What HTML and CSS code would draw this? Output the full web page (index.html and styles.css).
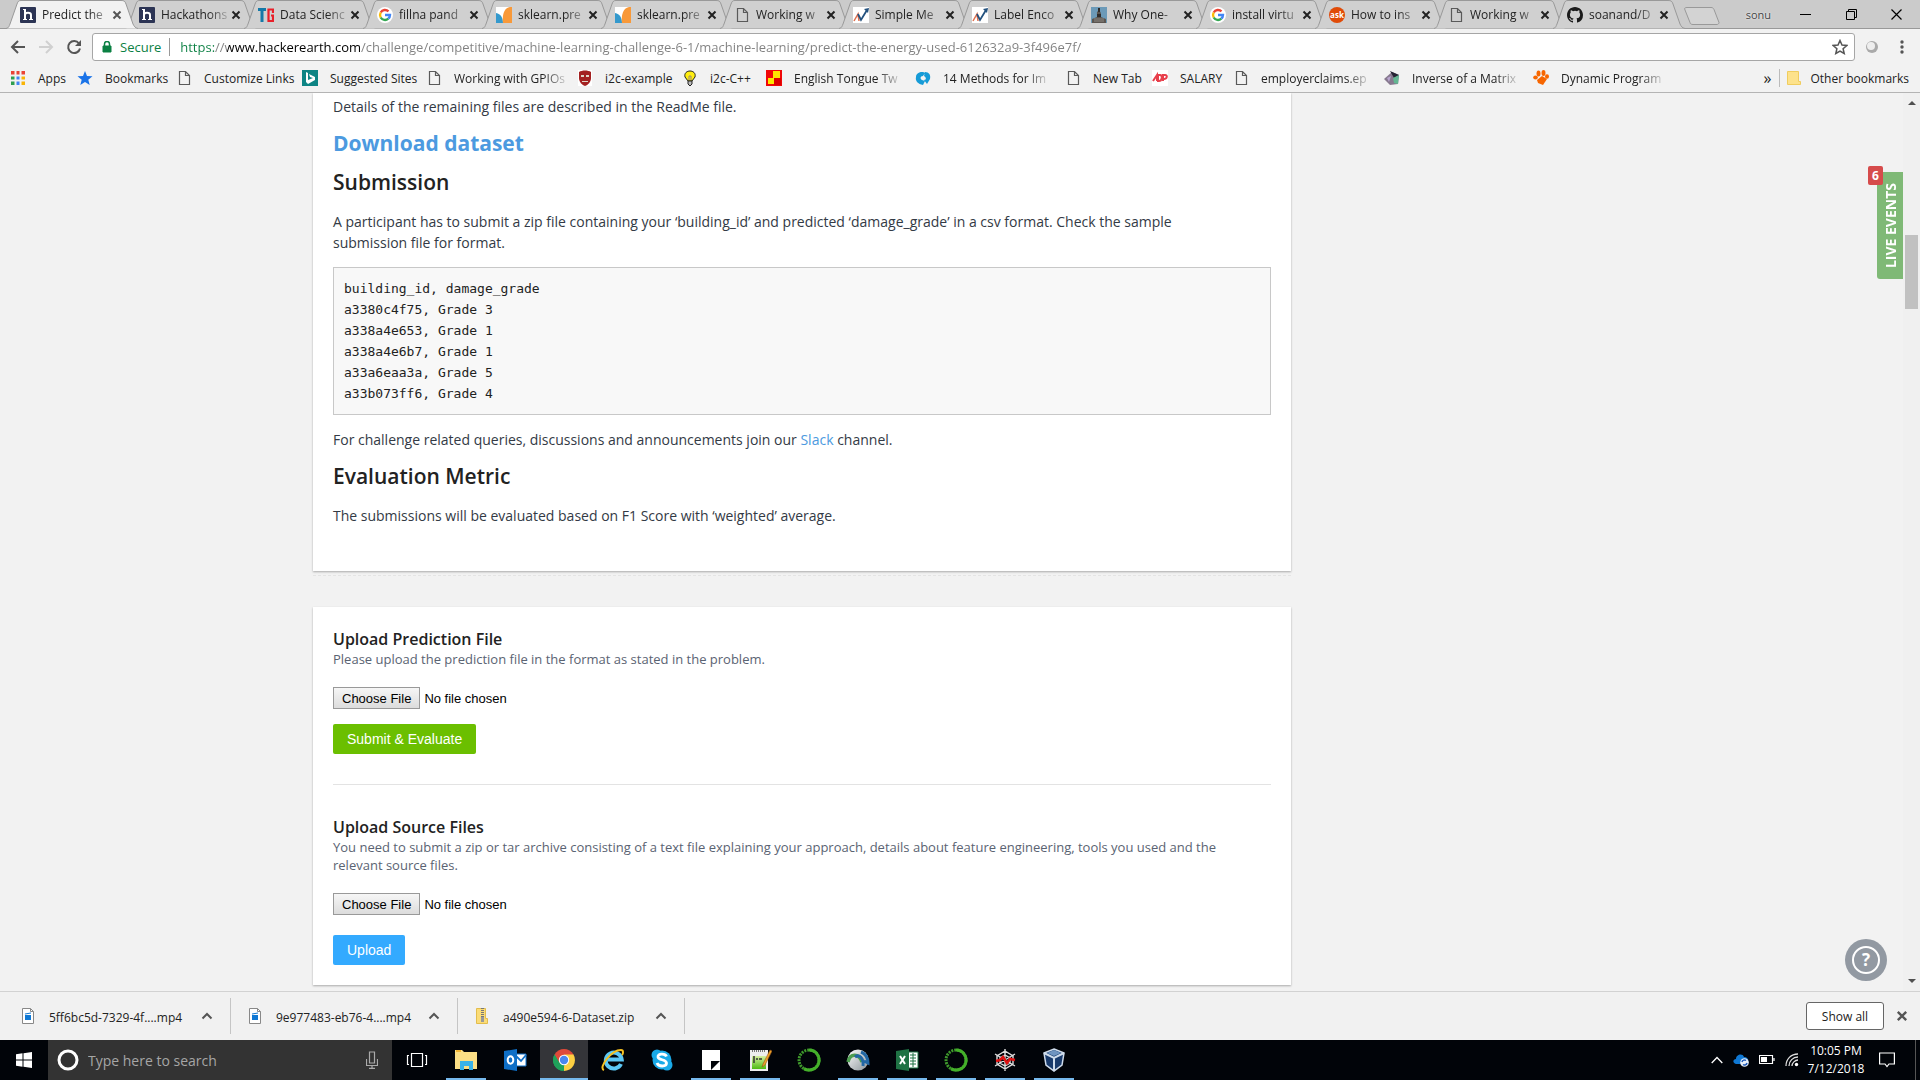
FILE: index.html
```html
<!DOCTYPE html>
<html lang="en">
<head>
<meta charset="utf-8">
<title>Predict the energy used</title>
<link rel="stylesheet" href="styles.css">
</head>
<body>
<svg class="defs" aria-hidden="true">
  <defs>
    <linearGradient id="metal" x1="0" y1="0" x2="1" y2="1"><stop offset="0" stop-color="#fff"/><stop offset="1" stop-color="#8a9399"/></linearGradient>
    <linearGradient id="green" x1="0" y1="0" x2="0" y2="1"><stop offset="0" stop-color="#d6f0a0"/><stop offset="1" stop-color="#4dbb12"/></linearGradient>
  </defs>
  <symbol id="shape" viewBox="0 0 132 29"><path d="M0 28.500C3 28 3 26 4 24L11 4C12 1 13 .5 15 .5H115C118 .5 119 1 120 4L127 24C128 26 129 28 132 28.500" stroke="#999"/></symbol>
  <symbol id="close" viewBox="0 0 10 10"><path d="M1.500 1.500l7 7m0-7l-7 7" stroke="currentColor" stroke-width="2" fill="none"/></symbol>
  <symbol id="caret" viewBox="0 0 12 8"><path d="M1.500 6.500L6 2l4.500 4.500" stroke="currentColor" stroke-width="2" fill="none"/></symbol>
  <symbol id="he" viewBox="0 0 16 16"><rect width="16" height="16" rx="1" fill="#2c3454"/><path d="M5 2v10M5 8c0-3 6-3 6 0v4" stroke="#fff" stroke-width="2" fill="none"/><path d="M3 2.500h2M3 12.500h4M9 12.500h4" stroke="#fff"/></symbol>
  <symbol id="tg" viewBox="0 0 16 16"><path d="M0 2.500h8M4 2v13" stroke="#1479a8" stroke-width="3" fill="none"/><path d="M15 6V2.500h-4.500v11.500H15V8.500h-2" stroke="#e8202a" stroke-width="2.200" fill="none"/></symbol>
  <symbol id="google" viewBox="0 0 16 16"><circle cx="8" cy="8" r="8" fill="#fff"/><g fill="none" stroke-width="2.400"><path d="M11.500 4.400A5 5 0 0 0 3.700 5.500" stroke="#ea4335"/><path d="M3.700 5.500a5 5 0 0 0 0 5" stroke="#fbbc05"/><path d="M3.700 10.500a5 5 0 0 0 7.600 1.200" stroke="#34a853"/><path d="M11.300 11.700A5 5 0 0 0 13 8H8" stroke="#4285f4"/></g></symbol>
  <symbol id="sk" viewBox="0 0 16 16"><rect width="16" height="16" fill="#fff"/><path d="M0 6c5 1 7 5 7 10H0z" fill="#3499cd"/><path d="M7 16C6 8 8 1 14 0h2v16z" fill="#f89939"/></symbol>
  <symbol id="page" viewBox="0 0 16 16"><path d="M3.500 1.500h6l4 4v9h-10zM9.500 1.500v4h4" fill="none" stroke="#5a5a5a" stroke-width="1.200"/></symbol>
  <symbol id="chart" viewBox="0 0 16 16"><rect width="16" height="16" fill="#fff"/><path d="M1 14l4-7 1 7" stroke="#e0704e" stroke-width="1.500" fill="none"/><path d="M5 7l3 6 6-10" stroke="#23517e" stroke-width="1.800" fill="none"/><path d="M11 2l5-1-1 5z" fill="#23517e"/></symbol>
  <symbol id="photo" viewBox="0 0 16 16"><rect width="16" height="16" fill="#6c9ab8"/><path d="M1 16v-4l5-2V7c-1-4 4-4 4 0v3l5 2v4z" fill="#5b5550"/><path d="M7 1h2v4H7zM6 7h4v3H6z" fill="#302c2a"/><path d="M3 12h10M3 14h10" stroke="#8e8a83"/></symbol>
  <symbol id="github" viewBox="0 0 16 16"><path fill="#1b1b1b" d="M8 0C3.580 0 0 3.580 0 8c0 3.540 2.290 6.530 5.470 7.590.4.070.55-.17.55-.38 0-.19-.01-.82-.01-1.490-2.010.37-2.530-.49-2.690-.94-.09-.23-.48-.94-.82-1.130-.28-.15-.68-.52-.01-.53.63-.01 1.080.58 1.230.82.72 1.210 1.870.87 2.330.66.070-.52.28-.87.51-1.070-1.780-.2-3.640-.89-3.640-3.950 0-.87.31-1.590.82-2.150-.08-.2-.36-1.020.08-2.120 0 0 .67-.21 2.200.82a7.600 7.600 0 0 1 4 0c1.530-1.040 2.200-.82 2.200-.82.44 1.100.16 1.920.08 2.120.51.56.82 1.270.82 2.150 0 3.070-1.870 3.750-3.650 3.950.29.25.54.73.54 1.480 0 1.070-.01 1.930-.01 2.200 0 .21.15.46.55.38A8 8 0 0 0 16 8c0-4.420-3.580-8-8-8z"/></symbol>
  <symbol id="video" viewBox="0 0 12 16"><path d="M.5.5h8l3 3v12H.5z" fill="#fff" stroke="#888"/><path d="M8.500.5v3h3" fill="none" stroke="#888"/><path d="M3 7h6v5H3z" fill="#0f78d4"/><path d="M3 6l6-1" stroke="#0f78d4"/></symbol>
  <symbol id="ring" viewBox="0 0 24 24"><circle cx="12" cy="12" r="10" fill="none" stroke="#3f9a2c" stroke-width="3" stroke-dasharray="2 1"/><path d="M12 2a10 10 0 1 1-5 18.600" fill="none" stroke="#44b02a" stroke-width="3"/></symbol>
</svg>

<header class="browser">
  <div class="strip">
    <nav class="tabs" aria-label="Tabs">
      <div class="tab active"><svg class="shape"><use href="#shape"/></svg><svg class="fav"><use href="#he"/></svg><span class="title">Predict the</span><button class="x" aria-label="Close"><svg><use href="#close"/></svg></button></div>
      <div class="tab"><svg class="shape"><use href="#shape"/></svg><svg class="fav"><use href="#he"/></svg><span class="title">Hackathons</span><button class="x" aria-label="Close"><svg><use href="#close"/></svg></button></div>
      <div class="tab"><svg class="shape"><use href="#shape"/></svg><svg class="fav"><use href="#tg"/></svg><span class="title">Data Scienc</span><button class="x" aria-label="Close"><svg><use href="#close"/></svg></button></div>
      <div class="tab"><svg class="shape"><use href="#shape"/></svg><svg class="fav"><use href="#google"/></svg><span class="title">fillna pand</span><button class="x" aria-label="Close"><svg><use href="#close"/></svg></button></div>
      <div class="tab"><svg class="shape"><use href="#shape"/></svg><svg class="fav"><use href="#sk"/></svg><span class="title">sklearn.pre</span><button class="x" aria-label="Close"><svg><use href="#close"/></svg></button></div>
      <div class="tab"><svg class="shape"><use href="#shape"/></svg><svg class="fav"><use href="#sk"/></svg><span class="title">sklearn.pre</span><button class="x" aria-label="Close"><svg><use href="#close"/></svg></button></div>
      <div class="tab"><svg class="shape"><use href="#shape"/></svg><svg class="fav"><use href="#page"/></svg><span class="title">Working w</span><button class="x" aria-label="Close"><svg><use href="#close"/></svg></button></div>
      <div class="tab"><svg class="shape"><use href="#shape"/></svg><svg class="fav"><use href="#chart"/></svg><span class="title">Simple Me</span><button class="x" aria-label="Close"><svg><use href="#close"/></svg></button></div>
      <div class="tab"><svg class="shape"><use href="#shape"/></svg><svg class="fav"><use href="#chart"/></svg><span class="title">Label Enco</span><button class="x" aria-label="Close"><svg><use href="#close"/></svg></button></div>
      <div class="tab"><svg class="shape"><use href="#shape"/></svg><svg class="fav"><use href="#photo"/></svg><span class="title">Why One-</span><button class="x" aria-label="Close"><svg><use href="#close"/></svg></button></div>
      <div class="tab"><svg class="shape"><use href="#shape"/></svg><svg class="fav"><use href="#google"/></svg><span class="title">install virtu</span><button class="x" aria-label="Close"><svg><use href="#close"/></svg></button></div>
      <div class="tab"><svg class="shape"><use href="#shape"/></svg><span class="fav ask">ask</span><span class="title">How to ins</span><button class="x" aria-label="Close"><svg><use href="#close"/></svg></button></div>
      <div class="tab"><svg class="shape"><use href="#shape"/></svg><svg class="fav"><use href="#page"/></svg><span class="title">Working w</span><button class="x" aria-label="Close"><svg><use href="#close"/></svg></button></div>
      <div class="tab"><svg class="shape"><use href="#shape"/></svg><svg class="fav"><use href="#github"/></svg><span class="title">soanand/D</span><button class="x" aria-label="Close"><svg><use href="#close"/></svg></button></div>
      <button class="newtab" aria-label="New tab"><svg width="36" height="18" viewBox="0 0 36 18"><path d="M3 .5h24c2 0 2 .5 3 2l5 13c0 1-1 2-2 2H9c-2 0-3-1-3-2L1 3C0 1 1 .5 3 .5z" fill="#d3d3d3" stroke="#999"/></svg></button>
    </nav>
    <div class="win">
      <span class="user">sonu</span>
      <button aria-label="Minimize"><svg width="11" height="11" viewBox="0 0 11 11"><path d="M0 5.500h11" stroke="#000"/></svg></button>
      <button aria-label="Restore"><svg width="11" height="11" viewBox="0 0 11 11"><path d="M.5 2.500h8v8h-8zM2.500 2.500v-2h8v8h-2" stroke="#000" fill="none"/></svg></button>
      <button aria-label="Close window"><svg width="11" height="11" viewBox="0 0 11 11"><path d="M.5.5l10 10m0-10l-10 10" stroke="#000" stroke-width="1.200"/></svg></button>
    </div>
  </div>

  <div class="toolbar">
    <button aria-label="Back"><svg width="16" height="16" viewBox="0 0 16 16"><path d="M15 8H2m6-6L2 8l6 6" stroke="#555" stroke-width="2" fill="none"/></svg></button>
    <button aria-label="Forward"><svg width="16" height="16" viewBox="0 0 16 16"><path d="M1 8h13M8 2l6 6-6 6" stroke="#d0d0d0" stroke-width="2" fill="none"/></svg></button>
    <button aria-label="Reload"><svg width="16" height="16" viewBox="0 0 16 16"><path d="M13 4.500A6 6 0 1 0 14 9.500" stroke="#555" stroke-width="2" fill="none"/><path d="M15 1v6H9z" fill="#555"/></svg></button>
    <div class="omnibox">
      <svg width="10" height="12" viewBox="0 0 10 12"><path d="M1 5h8v6H1z" fill="#0b8043" stroke="#0b8043"/><path d="M2.500 5V3a2.500 2.500 0 0 1 5 0v2" stroke="#0b8043" stroke-width="1.500" fill="none"/></svg>
      <label class="secure" for="url">Secure</label>
      <input class="url" id="url" type="text" value="https://www.hackerearth.com/challenge/competitive/machine-learning-challenge-6-1/machine-learning/predict-the-energy-used-612632a9-3f496e7f/">
      <svg width="16" height="16" viewBox="0 0 16 16"><path d="M8 1.500l2 4.600 4.800.4-3.700 3.200 1.100 4.800L8 12l-4.200 2.500 1.100-4.800L1.200 6.500 6 6.100z" fill="none" stroke="#555" stroke-width="1.500"/></svg>
    </div>
    <div class="ext">
      <svg width="14" height="14" viewBox="0 0 14 14"><circle cx="7" cy="7" r="6" fill="#aaa"/><circle cx="6" cy="6" r="4" fill="#eee"/></svg>
      <svg width="4" height="14" viewBox="0 0 4 14"><g fill="#555"><circle cx="2" cy="2" r="1.700"/><circle cx="2" cy="7" r="1.700"/><circle cx="2" cy="12" r="1.700"/></g></svg>
    </div>
  </div>

  <nav class="bookmarks" aria-label="Bookmarks">
    <a href="#"><svg viewBox="0 0 16 16"><g><path d="M1 1h4v4H1zM6 1h4v4H6zM11 1h4v4h-4z" fill="#ea4335"/><path d="M1 6h4v4H1zM1 11h4v4H1z" fill="#2f9e4f"/><path d="M6 6h4v4H6zM6 11h4v4H6z" fill="#4285f4"/><path d="M11 6h4v4h-4zM11 11h4v4h-4z" fill="#f9b406"/><path d="M5.500 1v14M10.500 1v14M1 5.500h14M1 10.500h14" stroke="#f2f2f2" stroke-width="2"/></g></svg><span>Apps</span></a>
    <a href="#"><svg viewBox="0 0 16 16"><path d="M8 1l2 5 5.500.3-4.200 3.500 1.400 5.200L8 12l-4.700 3 1.400-5.200L.5 6.300 6 6z" fill="#1a73e8"/></svg><span>Bookmarks</span></a>
    <a href="#"><svg><use href="#page"/></svg><span>Customize Links</span></a>
    <a href="#"><svg viewBox="0 0 16 16"><path d="M0 0h16v16H0z" fill="#0d8484"/><path d="M4 2l2 1v7l5-2-3-1-1-3 6 3v3l-7 4-2-2z" fill="#fff"/></svg><span>Suggested Sites</span></a>
    <a href="#"><svg><use href="#page"/></svg><span class="fade">Working with GPIOs</span></a>
    <a href="#"><svg viewBox="0 0 16 16"><path d="M1 0h14v16H1z" fill="#fff"/><path d="M2 2c3-2 9-2 12 0v6c0 4-3 7-6 8-3-1-6-4-6-8z" fill="#a32020"/><path d="M4 5h3v2H4zM9 5h3v2H9zM5 11h6v1H5z" fill="#ded6c8"/></svg><span>i2c-example</span></a>
    <a href="#"><svg viewBox="0 0 16 16"><path d="M6 11L3 7c-2-8 12-8 10 0l-3 4z" fill="#ffee10" stroke="#222"/><path d="M6 11h4v3l-2 2-2-2z" fill="#bbb" stroke="#222"/><path d="M7 10V6h2v4" fill="none" stroke="#987"/></svg><span>i2c-C++</span></a>
    <a href="#"><svg viewBox="0 0 16 16"><path d="M0 0h16v16H0z" fill="#f00808"/><path d="M7 1h7v7H7zM2 8h6v6H2z" fill="#ffe600"/><path d="M8 8h7v7H8z" fill="#d00"/></svg><span class="fade">English Tongue Tw</span></a>
    <a href="#"><svg viewBox="0 0 16 16"><path d="M1 7c0-5 7-6 9-4L8 6c-3 0-3 3-1 4l3 1-2 4C3 14 0 11 1 7zM10 2c4 0 6 3 5 7l-3 5-3-4c3 0 2-3 0-4z" fill="#169bd7"/></svg><span class="fade">14 Methods for Im</span></a>
    <a href="#"><svg><use href="#page"/></svg><span>New Tab</span></a>
    <a href="#"><svg viewBox="0 0 16 16"><path d="M0 0h16v16H0z" fill="#fff"/><path d="M1 11l4-6v6M6 5h2c3 0 2 6-1 6H6zM11 11V5h2c3 0 2 4-1 4" stroke="#e8404c" stroke-width="2" fill="none"/></svg><span>SALARY</span></a>
    <a href="#"><svg><use href="#page"/></svg><span class="fade">employerclaims.ep</span></a>
    <a href="#"><svg viewBox="0 0 16 16"><path d="M0 9L8 2l7 3-1 9-8 1z" fill="#87798f"/><path d="M6 1l9 4-5 3z" fill="#252333"/><path d="M9 8l6-3-1 9-4-1z" fill="#63b792"/><path d="M3 8l4-2-2 6z" fill="#b9a5cf"/></svg><span class="fade">Inverse of a Matrix</span></a>
    <a href="#"><svg viewBox="0 0 16 16"><g fill="#f76600"><path d="M4 10l5-4 5 3-2 3-2 3-5-2z"/><ellipse cx="2.500" cy="7.500" rx="2.300" ry="2"/><ellipse cx="5.500" cy="3.500" rx="2" ry="3"/><ellipse cx="10.500" cy="3" rx="2" ry="3"/><ellipse cx="14" cy="6.500" rx="2" ry="2.200"/></g></svg><span class="fade">Dynamic Program</span></a>
    <div class="more">
      <button class="chev" aria-label="More bookmarks">»</button>
      <a href="#"><svg viewBox="0 0 16 16"><path d="M1.500 1.500h11v10h2v3h-13z" fill="#fde28b" stroke="#f0cd5e"/></svg><span>Other bookmarks</span></a>
    </div>
  </nav>
</header>

<div class="viewport">
  <main class="page">
    <section class="card problem">
      <p>Details of the remaining files are described in the ReadMe file.</p>
      <h2 class="download"><a href="#">Download dataset</a></h2>
      <h2>Submission</h2>
      <p>A participant has to submit a zip file containing your ‘building_id’ and predicted ‘damage_grade’ in a csv format. Check the sample<br>submission file for format.</p>
      <pre>building_id, damage_grade
a3380c4f75, Grade 3
a338a4e653, Grade 1
a338a4e6b7, Grade 1
a33a6eaa3a, Grade 5
a33b073ff6, Grade 4</pre>
      <p>For challenge related queries, discussions and announcements join our <a href="#">Slack</a> channel.</p>
      <h2>Evaluation Metric</h2>
      <p>The submissions will be evaluated based on F1 Score with ‘weighted’ average.</p>
    </section>
    <div class="dash"></div>
    <section class="card upload">
      <form>
        <h3><label for="prediction">Upload Prediction File</label></h3>
        <p>Please upload the prediction file in the format as stated in the problem.</p>
        <input id="prediction" type="file">
        <button class="btn green" type="button">Submit &amp; Evaluate</button>
      </form>
      <hr>
      <form class="source">
        <h3><label for="source">Upload Source Files</label></h3>
        <p>You need to submit a zip or tar archive consisting of a text file explaining your approach, details about feature engineering, tools you used and the<br>relevant source files.</p>
        <input id="source" type="file">
        <button class="btn blue" type="button">Upload</button>
      </form>
    </section>
  </main>
  <div class="scroll">
    <svg width="8" height="5" viewBox="0 0 8 5"><path d="M0 5l4-4 4 4z" fill="#505050"/></svg>
    <div class="thumb"></div>
    <svg width="8" height="5" viewBox="0 0 8 5"><path d="M0 0l4 4 4-4z" fill="#505050"/></svg>
  </div>
  <button class="live"><span class="word">LIVE EVENTS</span><span class="count">6</span></button>
  <button class="help" aria-label="Help"><span>?</span></button>
</div>

<aside class="downloads">
  <div class="dl"><svg class="file"><use href="#video"/></svg><span>5ff6bc5d-7329-4f....mp4</span><button aria-label="Options"><svg><use href="#caret"/></svg></button></div>
  <div class="dl"><svg class="file"><use href="#video"/></svg><span>9e977483-eb76-4....mp4</span><button aria-label="Options"><svg><use href="#caret"/></svg></button></div>
  <div class="dl"><svg class="file" viewBox="0 0 12 16"><path d="M.5.5h9v10h2v5H.5z" fill="#fbdc77" stroke="#e3bd4c"/><path d="M6.500 0v14" stroke="#777" stroke-width="3" stroke-dasharray="1 1"/><path d="M5 9h3v5H5z" fill="#999"/></svg><span>a490e594-6-Dataset.zip</span><button aria-label="Options"><svg><use href="#caret"/></svg></button></div>
  <button class="showall">Show all</button>
  <button class="dismiss" aria-label="Close downloads"><svg><use href="#close"/></svg></button>
</aside>

<footer class="taskbar">
  <button class="start" aria-label="Start"><svg width="16" height="16" viewBox="0 0 16 16"><path d="M0 2.300L6.500 1.300v6.200H0zM7.500 1.200L16 0v7.500H7.500zM0 8.500h6.500v6.200L0 13.700zM7.500 8.500H16V16l-8.500-1.200z" fill="#fff"/></svg></button>
  <div class="search">
    <svg width="22" height="22" viewBox="0 0 22 22"><circle cx="11" cy="11" r="9" fill="none" stroke="#fff" stroke-width="3"/></svg>
    <input type="text" placeholder="Type here to search" aria-label="Type here to search">
    <svg width="12" height="18" viewBox="0 0 12 18"><path d="M3.500 1h5v11h-5zM.5 8v6.500h11V8M6 14.500V17M3 17.300h6" fill="none" stroke="#aaa" stroke-width="1.200"/></svg>
  </div>
  <nav class="apps" aria-label="Applications">
    <button aria-label="Task view"><svg viewBox="0 0 24 24"><path d="M6.500 5.500h11v13h-11zM4 7.500H2.500v9H4M20 7.500h1.500v9H20" fill="none" stroke="#fff" stroke-width="1.200"/></svg></button>
    <button class="run" aria-label="File Explorer"><svg viewBox="0 0 24 24"><path d="M1 2h7l2 2h13v17H1z" fill="#fbdf85"/><path d="M2 3h5" stroke="#f0a818" stroke-width="1.500"/><path d="M6 22v-9h13v9h-4v-4h-5v4z" fill="#39b2e8"/></svg></button>
    <button aria-label="Outlook"><svg viewBox="0 0 24 24"><path d="M12 6h11v12H12z" fill="#fff" stroke="#1070c8"/><path d="M12 7l6 6 5-6" fill="none" stroke="#1070c8" stroke-width="1.800"/><path d="M1 3L14 1v22L1 21z" fill="#0f6fc6"/><ellipse cx="7.500" cy="12" rx="2.800" ry="3.700" fill="none" stroke="#fff" stroke-width="2"/></svg></button>
    <button class="run current" aria-label="Chrome"><svg viewBox="0 0 24 24"><path d="M12 12L2.500 6.500A11 11 0 0 1 21.500 6.500z" fill="#de4a3a"/><path d="M12 12L21.500 6.500A11 11 0 0 1 12 23z" fill="#fccf42"/><path d="M12 12L12 23A11 11 0 0 1 2.500 6.500z" fill="#1fa15a"/><path d="M12 6.500h9.500L17 14z" fill="#fccf42"/><path d="M2.500 6.500L7.500 15l4-9z" fill="#de4a3a"/><path d="M2.500 6.500l5 8.500 5 2-2 6A11 11 0 0 1 2.500 6.500z" fill="#1fa15a"/><circle cx="12" cy="12" r="5.200" fill="#fff"/><circle cx="12" cy="12" r="4.200" fill="#4a87ee"/></svg></button>
    <button aria-label="Internet Explorer"><svg viewBox="0 0 24 24"><path d="M20 16a8 8 0 1 1 .7-4.500H7" fill="none" stroke="#5cc8f5" stroke-width="4"/><path d="M3 22C-3 20 10 2 20 2c3 0 2 4 1 5" fill="none" stroke="#f6c121" stroke-width="2"/></svg></button>
    <button aria-label="Skype"><svg viewBox="0 0 24 24"><circle cx="12" cy="12" r="9.500" fill="#1aaae8"/><circle cx="7" cy="7" r="5.500" fill="#1aaae8"/><circle cx="17" cy="17" r="5.500" fill="#1aaae8"/><path d="M16.500 8.500C15 5 7.500 5.500 8 9c.5 3.500 8.500 2 8.500 6 0 4-8 4-9.500 0" fill="none" stroke="#fff" stroke-width="2.800"/></svg></button>
    <button class="run" aria-label="Sticky Notes"><svg viewBox="0 0 24 24"><path d="M3 2h18v20H3z" fill="#fff"/><path d="M12 22v-9h9z" fill="#010409"/><path d="M21 14v8h-7z" fill="#fff"/></svg></button>
    <button class="run" aria-label="Notepad++"><svg viewBox="0 0 24 24"><path d="M2 2h18v21H2z" fill="#eee"/><path d="M4 8h14v13H4z" fill="url(#green)"/><path d="M4 3h14" stroke="#777" stroke-width="2" stroke-dasharray="1 1"/><path d="M6 8v7M8 11h2M11 11h3" stroke="#333" stroke-width="1.500"/><path d="M22 2l-7 14-1 3 3-2 7-14z" fill="#efa129" stroke="#92561a" stroke-width=".6"/></svg></button>
    <button aria-label="Anaconda"><svg><use href="#ring"/></svg></button>
    <button class="run" aria-label="VPN client"><svg viewBox="0 0 24 24"><circle cx="12" cy="12" r="10.500" fill="url(#metal)"/><path d="M2 14C4 5 13 5 16 14" fill="none" stroke="#4d9d50" stroke-width="3.500"/><path d="M9 9c4-3 9 1 8 9M15 4c5 2 7 6 7 11l-4-2" fill="none" stroke="#2167a5" stroke-width="3"/></svg></button>
    <button class="run" aria-label="Excel"><svg viewBox="0 0 24 24"><path d="M12 4h11v16H12z" fill="#fff" stroke="#1f7244"/><path d="M15 7h6M15 10h6M15 13h6M15 16h6M18 5v14" stroke="#1f7244"/><path d="M1 3L14 1v22L1 21z" fill="#1f7244"/><path d="M5 8l5 8M10 8l-5 8" stroke="#fff" stroke-width="2"/></svg></button>
    <button class="run" aria-label="Anaconda Prompt"><svg><use href="#ring"/></svg></button>
    <button class="run" aria-label="Spyder"><svg viewBox="0 0 24 24"><path d="M12 1v22M2 6l20 12M22 6L2 18M12 3l8 5v8l-8 5-8-5V8zM12 7l5 3v5l-5 3-5-3v-5z" fill="none" stroke="#ddd" stroke-width="1.400"/><path d="M3 13l4-1 3-3 4 6 3-4 5 1" fill="none" stroke="#e01010" stroke-width="2.500"/></svg></button>
    <button class="run" aria-label="VirtualBox"><svg viewBox="0 0 24 24"><path d="M12 1l10 4-2 12-8 6-8-6L2 5z" fill="#183a6c" stroke="#cfdcec" stroke-width="1.500"/><path d="M2 5l10 5 10-5M12 10v13" stroke="#cfdcec" stroke-width="2" fill="none"/><path d="M12 2l7 3-7 3-7-3z" fill="#6f94c0"/></svg></button>
  </nav>
  <div class="tray">
    <svg width="12" height="8" viewBox="0 0 12 8"><path d="M.7 7L6 1.500 11.300 7" stroke="#fff" stroke-width="1.300" fill="none"/></svg>
    <svg width="16" height="14" viewBox="0 0 16 14"><path d="M3 11C-1 10 0 6 3 6c0-5 7-6 8-2 4 0 5 3 4 7z" fill="#0f78d4"/><circle cx="11.500" cy="9.500" r="4.300" fill="#e8f0fa"/><path d="M9 9a2.500 2.500 0 0 1 4-1.500M14 10a2.500 2.500 0 0 1-4 1.500" stroke="#1c58b8" stroke-width="1.500" fill="none"/></svg>
    <svg width="16" height="10" viewBox="0 0 16 10"><path d="M.5.5h13v8H.5zM15 3v3" fill="none" stroke="#fff" stroke-width="1.200"/><path d="M2 2h6v5H2z" fill="#fff"/></svg>
    <svg width="14" height="14" viewBox="0 0 14 14"><g fill="none" stroke="#ddd" stroke-width="1.300"><path d="M1 13C1 6 6 1 13 1"/><path d="M4 13c0-5 4-9 9-9"/><path d="M7 13c0-3 3-6 6-6"/></g><circle cx="11.500" cy="11.500" r="1.700" fill="#fff"/></svg>
    <div class="clock"><span>10:05 PM</span><span>7/12/2018</span></div>
    <svg width="16" height="16" viewBox="0 0 16 16"><path d="M.6 1h14.800v11H10l-2 2.500L6 12H.6z" fill="none" stroke="#fff" stroke-width="1.200"/></svg>
  </div>
  <div class="peek"></div>
</footer>
</body>
</html>
```

FILE: styles.css
```css
* { box-sizing: border-box; }

body {
  margin: 0;
  height: 100vh;
  display: flex;
  flex-direction: column;
  overflow: hidden;
  font-family: "Open Sans", sans-serif;
  font-size: 12px;
  color: #222;
  background: #f2f2f2;
}

button {
  border: 0;
  padding: 0;
  background: none;
  color: inherit;
  font: inherit;
  display: flex;
  align-items: center;
  justify-content: center;
}

svg { flex: none; display: block; }
a { color: inherit; text-decoration: none; }
.defs { position: absolute; width: 0; height: 0; }

/* Browser chrome */
.browser { flex: none; border-bottom: 1px solid #b4b4b4; }

.strip {
  display: flex;
  justify-content: space-between;
  height: 29px;
  background: #cbcbcb;
  border-bottom: 1px solid #999;
}

.tabs { display: flex; padding-left: 6px; align-items: flex-start; }

.tab {
  position: relative;
  display: flex;
  align-items: center;
  width: 119px;
  height: 29px;
  padding-left: 14px;
}

.tab .shape {
  position: absolute;
  left: 0;
  top: 0;
  width: 132px;
  height: 29px;
  fill: #d0d0d0;
}

.tab.active { z-index: 1; }
.tab.active .shape { fill: #f2f2f2; }
.fav { position: relative; width: 16px; height: 16px; flex: none; }

.ask {
  border-radius: 8px;
  background: #e04b08;
  color: #fff;
  font: bold 8px/16px "Open Sans", sans-serif;
  text-align: center;
}

.title {
  position: relative;
  flex: 1;
  margin-left: 6px;
  white-space: nowrap;
  color: #222;
  mask-image: linear-gradient(to right, #000 70%, rgba(0, 0, 0, .2));
}

.x { position: relative; width: 16px; height: 22px; }
.x svg { width: 10px; height: 10px; }
.tab.active .x { color: #555; }
.newtab { margin: 7px 0 0 12px; }

.win { display: flex; align-items: center; padding-right: 18px; }
.win button { width: 46px; height: 28px; }
.win button:last-child { width: 11px; margin-left: 17px; }
.user { margin-right: 11px; font-size: 11px; color: #444; text-shadow: 0 0 2px #fff; }

.toolbar {
  display: flex;
  align-items: center;
  gap: 12px;
  height: 35px;
  padding: 0 16px 0 10px;
}

.omnibox {
  flex: 1;
  display: flex;
  align-items: center;
  height: 28px;
  margin: 0 -2px;
  padding: 0 6px 0 9px;
  background: #fff;
  border: 1px solid #a6a6a6;
  border-radius: 3px;
}

.secure {
  margin-left: 8px;
  padding-right: 8px;
  border-right: 1px solid #999;
  font-size: 13px;
  line-height: 18px;
  color: #0b8043;
}

/* Scheme, host and path of the address get their own shades */
.url {
  flex: 1;
  min-width: 0;
  height: 24px;
  margin-left: 10px;
  padding: 0;
  border: 0;
  outline: 0;
  font: 13px "Open Sans", sans-serif;
  background: linear-gradient(to right, #0b8043 34px, #808080 34px 47px, #000 47px 181px, #808080 181px);
  background-clip: text;
  -webkit-background-clip: text;
  -webkit-text-fill-color: transparent;
}

.ext { display: flex; align-items: center; gap: 21px; }

.bookmarks {
  display: grid;
  grid-template-columns: 67px 99px 126px 124px 151px 105px 84px 149px 150px 87px 81px 151px 149px 142px 1fr;
  align-items: center;
  height: 28px;
  padding: 0 11px 0 10px;
}

.bookmarks a { display: flex; align-items: center; gap: 12px; white-space: nowrap; }
.bookmarks a svg { width: 16px; height: 16px; }
.bookmarks .fade { mask-image: linear-gradient(to right, #000 80%, rgba(0, 0, 0, .2)); }
.more { display: flex; justify-content: flex-end; align-items: center; gap: 6px; }
.more a { gap: 8px; }
.chev { padding-right: 8px; border-right: 1px solid #bbb; font-size: 16px; line-height: 18px; }

/* Page */
.viewport {
  position: relative;
  flex: 1;
  min-height: 0;
  display: flex;
  overflow: hidden;
}

.page { flex: 1; padding-left: 313px; padding-right: 31.9%; }
.page a { color: #4c9ae0; }

.card {
  background: #fff;
  padding: 0 20px;
  box-shadow: 0 1px 2px rgba(0, 0, 0, .3);
}

.card p { margin: 0; font-size: 14px; line-height: 21px; color: #333a45; }
.problem { padding-top: 3px; padding-bottom: 45px; }
.card h2 { margin: 13px 0 16px; font-size: 21px; line-height: 26px; font-weight: 600; }
.card .download { margin-bottom: 13px; font-weight: 700; }

.card pre {
  margin: 14px 0;
  padding: 10px;
  border: 1px solid #c8c8c8;
  background: #f8f8f8;
  font: 13px/21px "DejaVu Sans Mono", monospace;
}

.dash { margin: 4px 0 31px; border-top: 1px dashed #e4e4e4; }

.upload { padding-top: 21px; padding-bottom: 20px; }
.upload h3 { margin: 0; font-size: 16px; line-height: 22px; font-weight: 600; }
.upload p { font-size: 13px; line-height: 18px; color: #5a6372; }
.upload hr { margin: 30px 0 31px; border: 0; border-top: 1px solid #e3e3e3; }

input[type="file"] {
  display: block;
  height: 22px;
  margin: 19px 0 15px;
  font: 13px "Liberation Sans", sans-serif;
  color: #000;
}
.source input[type="file"] { margin-bottom: 20px; }

input[type="file"]::file-selector-button {
  height: 22px;
  margin: 0 4px 0 0;
  padding: 0 8px;
  border: 1px solid #999;
  border-radius: 0;
  background: linear-gradient(#f6f6f6, #dcdcdc);
  font: 13px "Liberation Sans", sans-serif;
}

.btn {
  height: 30px;
  padding: 0 14px;
  border-radius: 2px;
  color: #fff;
  font: 14px "Liberation Sans", sans-serif;
}
.green { background: #6bbf00; }
.blue { background: #33aaff; }

.scroll {
  width: 17px;
  display: flex;
  flex-direction: column;
  align-items: center;
  padding: 7px 2px;
  background: #f0f0f0;
}
.thumb { width: 13px; height: 74px; margin: 130px 0 auto; background: #c1c1c1; }

.live {
  position: absolute;
  right: 17px;
  top: 79px;
  width: 26px;
  height: 107px;
  border-radius: 2px 0 0 3px;
  background: #7fb976;
  color: #fff;
  font-size: 14px;
  font-weight: 700;
}
.word { writing-mode: vertical-rl; transform: rotate(180deg); }
.count {
  position: absolute;
  left: -9px;
  top: -6px;
  width: 15px;
  border-radius: 2px;
  background: #d64b4b;
  font-size: 12px;
  line-height: 19px;
}

.help {
  position: absolute;
  right: 33px;
  bottom: 10px;
  width: 42px;
  height: 42px;
  border-radius: 50%;
  background: #9299a2;
}
.help span {
  width: 28px;
  height: 28px;
  border: 2px solid #fff;
  border-radius: 50%;
  color: #fff;
  font: bold 17px/23px "Open Sans", sans-serif;
}

/* Downloads shelf */
.downloads {
  flex: none;
  display: flex;
  align-items: center;
  height: 49px;
  padding-left: 4px;
  padding-right: 12px;
  border-top: 1px solid #d2d2d2;
  background: #f1f1f1;
}
.dl {
  display: flex;
  align-items: center;
  width: 227px;
  height: 36px;
  padding: 0 17px 0 18px;
  border-right: 1px solid #c5c5c5;
}
.dl span { flex: 1; margin-left: 15px; padding-top: 2px; white-space: nowrap; }
.file { width: 12px; height: 16px; }
.dl button { color: #555; }
.dl button svg { width: 12px; height: 8px; }
.showall {
  width: 78px;
  height: 28px;
  margin-left: auto;
  border: 1px solid #666;
  border-radius: 3px;
  background: #fff;
}
.dismiss { margin-left: 12px; color: #555; }
.dismiss svg { width: 12px; height: 12px; }

/* Taskbar */
.taskbar { flex: none; display: flex; height: 40px; background: #010409; color: #fff; }
.start { width: 48px; }
.search {
  display: flex;
  align-items: center;
  width: 344px;
  padding: 0 14px 0 9px;
  background: #333;
}
.search input {
  flex: 1;
  margin-left: 9px;
  padding: 0;
  border: 0;
  background: none;
  font: 14px "Open Sans", sans-serif;
}
.search input::placeholder { color: #a6a6a6; }
.apps { display: flex; gap: 1px; padding-left: 1px; }
.apps button { position: relative; width: 48px; height: 40px; }
.apps svg { width: 24px; height: 24px; }
.run::after {
  content: "";
  position: absolute;
  left: 4px;
  right: 4px;
  bottom: 0;
  height: 2px;
  background: #76b9ed;
}
.current { background: #343539; }
.current::after { left: 0; right: 0; }

.tray { display: flex; align-items: center; gap: 10px; margin-left: auto; padding-right: 20px; }
.clock { display: flex; flex-direction: column; align-items: center; width: 54px; line-height: 18px; margin-right: 6px; }
.peek { width: 5px; border-left: 1px solid #555; }
```
